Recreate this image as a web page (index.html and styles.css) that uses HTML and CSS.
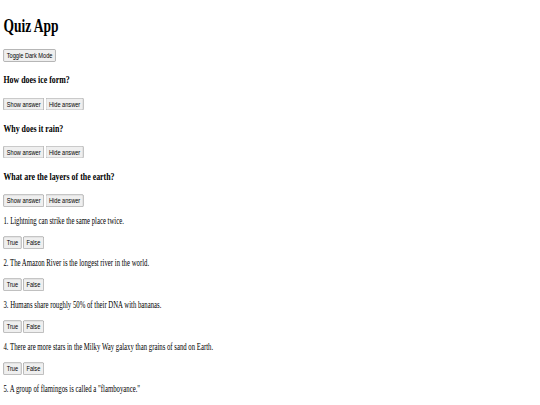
FILE: index.html
```html
<!DOCTYPE html>
<html lang="en">
<head>
<meta charset="utf-8">
<title>Quiz App</title>
<link rel="stylesheet" href="styles.css">
</head>
<body>
<div class="viewport">
  <div class="page">
    <h1 class="title">Quiz App</h1>
    <button class="btn">Toggle Dark Mode</button>

    <div class="question">
      <h3 class="q-title">How does ice form?</h3>
      <button class="btn">Show answer</button>
      <button class="btn">Hide answer</button>
    </div>

    <div class="question">
      <h3 class="q-title">Why does it rain?</h3>
      <button class="btn">Show answer</button>
      <button class="btn">Hide answer</button>
    </div>

    <div class="question">
      <h3 class="q-title">What are the layers of the earth?</h3>
      <button class="btn">Show answer</button>
      <button class="btn">Hide answer</button>
    </div>

    <div class="tf">
      <p class="statement">1. Lightning can strike the same place twice.</p>
      <button class="btn">True</button>
      <button class="btn">False</button>
    </div>
    <div class="tf">
      <p class="statement">2. The Amazon River is the longest river in the world.</p>
      <button class="btn">True</button>
      <button class="btn">False</button>
    </div>
    <div class="tf">
      <p class="statement">3. Humans share roughly 50% of their DNA with bananas.</p>
      <button class="btn">True</button>
      <button class="btn">False</button>
    </div>
    <div class="tf">
      <p class="statement">4. There are more stars in the Milky Way galaxy than grains of sand on Earth.</p>
      <button class="btn">True</button>
      <button class="btn">False</button>
    </div>
    <div class="tf">
      <p class="statement">5. A group of flamingos is called a "flamboyance."</p>
    </div>
  </div>
</div>
</body>
</html>
```
FILE: styles.css
```css
html, body {
  margin: 0;
  padding: 0;
  background: #ffffff;
  overflow: hidden;
}

.viewport {
  display: flow-root;
  width: 1280px;
  transform: scale(0.421875, 0.6);
  transform-origin: 0 0;
}

.page {
  margin: 8px;
  font-family: "Liberation Serif", "Times New Roman", serif;
  font-size: 16px;
  color: #000000;
}

.title {
  font-size: 32px;
  font-weight: bold;
  margin: 24px 0 21.44px;
}

.q-title {
  font-size: 18.72px;
  font-weight: bold;
  margin: 18.72px 0;
}

.statement {
  margin: 15.5px 0;
}

.btn {
  font-family: "Liberation Sans", Arial, sans-serif;
  font-size: 13.333px;
}
```
